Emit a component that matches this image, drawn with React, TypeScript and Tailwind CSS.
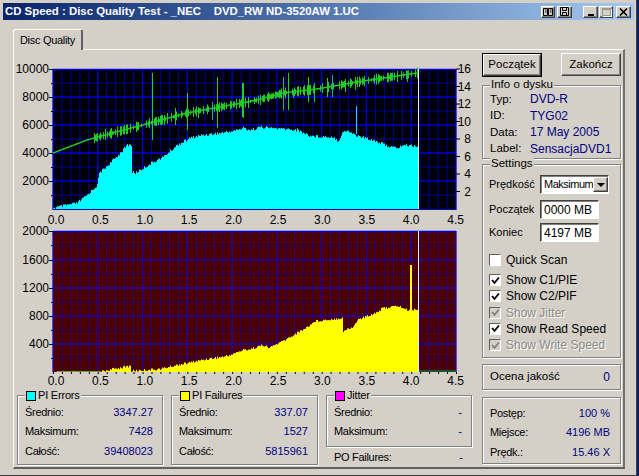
import React from "react";

type P = [number, number];
const cyan: P[] = [[53,208],[77,203],[87,195],[97,185],[99,173],[110,163],[120,153],[127,145],[131,145],[131.5,172],[135,173],[153,162],[163,157],[177,145],[190,138],[203,135],[220,133],[233,131],[243,128],[250,130],[260,127],[283,129],[297,130],[310,136],[333,137],[338,141],[343,131],[350,132],[357,136],[373,140],[390,147],[397,148],[403,145],[418,146]];
const green: P[] = [[53,153],[87,140],[105,135],[150,123],[187,113],[220,107],[247,102],[257,100],[283,93],[317,89],[357,82],[417,73]];
const yellow: P[] = [[53,372],[100,372],[113,369],[130,366],[131,371],[160,369],[177,365],[207,359],[227,356],[243,350],[250,349],[263,345],[268,348],[283,341],[307,327],[315,321],[342,318],[343,331],[353,327],[357,320],[377,312],[383,308],[398,306],[407,310],[418,309]];
const spikes: [number, number, number][] = [[152,73,140],[187,93,130],[217,77,128],[212,102,120],[243,83,118],[175,108,125],[105,129,140],[198,107,118],[283,77,110],[288,73,110],[308,77,102],[314,83,102],[327,78,97],[332,75,97],[355,77,90],[242,83,117],[260,95,105],[397,72,82],[407,72,82],[138,122,130],[164,115,125],[248,97,108],[268,92,102],[293,90,98],[345,80,92]];

const at = (pts: P[], x: number) => {
  for (let i = 1; i < pts.length; i++) {
    if (x <= pts[i][0]) {
      const [a, b] = pts[i - 1];
      const [c, d] = pts[i];
      return b + ((d - b) * (x - a)) / (c - a || 1);
    }
  }
  return pts[pts.length - 1][1];
};
const rnd = (n: number) => {
  const s = Math.sin(n * 12.9898) * 43758.5453;
  return s - Math.floor(s);
};
const area = (pts: P[], bottom: number, amp: number) => {
  let d = `M53 ${bottom}`;
  for (let x = 53; x <= 418; x++) {
    const y = at(pts, x) + (rnd(x) - 0.5) * amp;
    d += `L${x} ${Math.min(bottom, y).toFixed(1)}L${x + 1} ${Math.min(bottom, y).toFixed(1)}`;
  }
  return d + `L419 ${bottom}Z`;
};
const greenLine = () => {
  let d = "";
  for (let x = 53; x <= 417; x++) {
    d += `${x === 53 ? "M" : "L"}${x} ${at(green, x).toFixed(1)}`;
  }
  return d;
};
const greenFuzz = () => {
  let d = "";
  for (let x = 92; x <= 417; x++) {
    if (rnd(x + 3) < 0.55) {
      const y = at(green, x);
      const a = 1.5 + rnd(x + 11) * 4;
      d += `M${x + 0.5} ${(y - a).toFixed(1)}V${(y + a).toFixed(1)}`;
    }
  }
  return d;
};

const FONT = "'Liberation Sans', Arial, sans-serif";

function Grid({ top, bottom, bg, rows, minor, major }: { top: number; bottom: number; bg: string; rows: number[]; minor: string; major: string }) {
  const xs = Array.from({ length: 46 }, (_, i) => 53 + (403 / 45) * i);
  return (
    <g>
      <rect x={53} y={top} width={403} height={bottom - top} fill={bg} />
      {xs.map((x, i) =>
        i % 5 ? <line key={i} x1={x} x2={x} y1={top} y2={bottom} stroke={minor} /> : null
      )}
      {rows.map((y) => (
        <line key={y} x1={53} x2={456} y1={y + 14} y2={y + 14} stroke={minor} />
      ))}
      <line x1={53} x2={456} y1={rows[0] - 14} y2={rows[0] - 14} stroke={minor} />
      {xs.map((x, i) =>
        i % 5 === 0 ? <line key={i} x1={x} x2={x} y1={top} y2={bottom} stroke={major} strokeWidth={1.3} /> : null
      )}
      {rows.map((y) => (
        <line key={y} x1={53} x2={456} y1={y} y2={y} stroke={major} strokeWidth={1.3} />
      ))}
      <line x1={53} x2={456} y1={top + 0.5} y2={top + 0.5} stroke="#0000e0" strokeWidth={1.5} />
    </g>
  );
}

function Charts() {
  const xl = ["0.0", "0.5", "1.0", "1.5", "2.0", "2.5", "3.0", "3.5", "4.0", "4.5"];
  const t = { fontFamily: FONT, fontSize: 12, fill: "#000" };
  return (
    <svg width={462} height={335} viewBox="14 60 462 335" className="block">
      {/* upper */}
      <Grid top={69} bottom={210} bg="#000008" rows={[97, 125, 153, 181]} minor="#000090" major="#0000d8" />
      <path d={area(cyan, 209.5, 3)} fill="#00ffff" />
      <line x1={356.5} x2={356.5} y1={106} y2={134} stroke="#30d8c0" />
      <path d={greenLine()} fill="none" stroke="#22cc22" strokeWidth={1.5} />
      <path d={greenFuzz()} fill="none" stroke="#22cc22" strokeWidth={1} />
      {spikes.map(([x, a, b], i) => (
        <line key={i} x1={x + 0.5} x2={x + 0.5} y1={a} y2={b} stroke={i % 5 === 3 ? "#20b090" : "#22d022"} strokeWidth={1} />
      ))}
      <line x1={418.5} x2={418.5} y1={69} y2={210} stroke="#f0f0f0" />
      <line x1={53} x2={456} y1={209.5} y2={209.5} stroke="#0000c0" />
      {[["10000", 69], ["8000", 97], ["6000", 125], ["4000", 153], ["2000", 181]].map(([s, y]) => (
        <g key={s as string}>
          <text x={49} y={(y as number) + 4} textAnchor="end" {...t}>{s}</text>
          <line x1={49} x2={53} y1={(y as number) + 0.5} y2={(y as number) + 0.5} stroke="#000" />
          <line x1={51} x2={53} y1={(y as number) + 14.5} y2={(y as number) + 14.5} stroke="#000" />
        </g>
      ))}
      {[16, 14, 12, 10, 8, 6, 4, 2].map((n) => {
        const y = 209 - n * 8.75;
        return (
          <g key={n}>
            <line x1={456} x2={460} y1={y} y2={y} stroke="#000" />
            <text x={471} y={y + 4} textAnchor="end" {...t}>{n}</text>
          </g>
        );
      })}
      {xl.map((s, i) => (
        <text key={s} x={56 + 44.4 * i} y={224} textAnchor="middle" {...t}>{s}</text>
      ))}

      {/* lower */}
      <Grid top={231} bottom={372} bg="#4c0000" rows={[260, 288, 316, 344]} minor="#280078" major="#1c00b8" />
      <path d={area(yellow, 372, 2.5)} fill="#ffff00" />
      <line x1={411} x2={411} y1={265} y2={310} stroke="#ffff00" strokeWidth={2} />
      <line x1={418.5} x2={418.5} y1={231} y2={372} stroke="#f0f0f0" />
      <line x1={419} x2={456} y1={371} y2={371} stroke="#205030" strokeWidth={2} />
      <line x1={58} x2={100} y1={371.5} y2={371.5} stroke="#70a020" />
      {[["2000", 231], ["1600", 260], ["1200", 288], ["800", 316], ["400", 344]].map(([s, y]) => (
        <g key={s as string}>
          <text x={49} y={(y as number) + 4} textAnchor="end" {...t}>{s}</text>
          <line x1={49} x2={53} y1={(y as number) + 0.5} y2={(y as number) + 0.5} stroke="#000" />
          <line x1={51} x2={53} y1={(y as number) + 14.5} y2={(y as number) + 14.5} stroke="#000" />
        </g>
      ))}
      {Array.from({ length: 46 }, (_, i) => (
        <rect key={i} x={53 + (403 / 45) * i} y={372} width={1} height={2} fill="#000" />
      ))}
      {xl.map((s, i) => (
        <text key={s} x={56 + 44.4 * i} y={385} textAnchor="middle" {...t}>{s}</text>
      ))}
    </svg>
  );
}

function Stat({ label, value, h = "h-[19.5px]" }: { label: string; value: string; h?: string }) {
  return (
    <div className={`flex items-center justify-between ${h}`}>
      <span className="text-[11px] tracking-[-0.3px]">{label}</span>
      <span className="text-[11px] text-[#000080]">{value}</span>
    </div>
  );
}

function Etched({ className = "", children }: { className?: string; children: React.ReactNode }) {
  return (
    <div className={`relative border border-[#808080] shadow-[1px_1px_0_#fff,inset_1px_1px_0_#fff] ${className}`}>
      {children}
    </div>
  );
}

function Legend({ color, label }: { color: string; label: string }) {
  return (
    <div className="absolute left-[7px] top-[-8px] flex h-[15px] items-center gap-[2px] bg-[#d4d0c8] px-[1px] text-[11px] tracking-[-0.2px]">
      <span className="h-[10px] w-[10px] border border-black" style={{ background: color }} />
      <span>{label}</span>
    </div>
  );
}

function Stats({ color, label, rows, className }: { color: string; label: string; rows: [string, string][]; className: string }) {
  return (
    <Etched className={className}>
      <Legend color={color} label={label} />
      <div className="flex flex-col pl-[7px] pr-[9px] pt-[6px]">
        {rows.map(([a, b]) => (
          <Stat key={a} label={a} value={b} />
        ))}
      </div>
    </Etched>
  );
}

function Check({ label, checked, disabled }: { label: string; checked?: boolean; disabled?: boolean }) {
  return (
    <div className="flex h-[16px] items-center gap-[5px]">
      <span className={`flex h-[12px] w-[12px] items-center justify-center border border-b-white border-l-[#606060] border-r-white border-t-[#606060] ${disabled ? "bg-[#d4d0c8]" : "bg-white"}`}>
        {checked && (
          <svg width="9" height="9" viewBox="0 0 9 9">
            <path d="M1 4 L3.5 6.8 L8 1.5" fill="none" stroke={disabled ? "#808080" : "#000"} strokeWidth="1.8" />
          </svg>
        )}
      </span>
      <span className={disabled ? "text-[#8c8a85] [text-shadow:1px_1px_0_#fff]" : ""}>{label}</span>
    </div>
  );
}

const raised = "border border-t-white border-l-white border-r-[#404040] border-b-[#404040] bg-[#d4d0c8] shadow-[inset_-1px_-1px_0_#808080]";
const sunken = "border border-t-[#404040] border-l-[#404040] border-r-white border-b-white shadow-[inset_1px_1px_0_#808080] bg-white";

function Field({ label, value }: { label: string; value: string }) {
  return (
    <div className="flex h-[19px] items-center">
      <span className="w-[51px] text-[11px]">{label}</span>
      <div className={`flex h-[19px] w-[59px] items-center pl-[3px] ${sunken}`}>{value}</div>
    </div>
  );
}

function TitleBtn({ children, className = "" }: { children: React.ReactNode; className?: string }) {
  return <div className={`flex h-[12px] items-center justify-center ${raised} ${className}`}>{children}</div>;
}

export default function App() {
  return (
    <div className="h-[476px] w-[639px] overflow-hidden bg-[#0a2060]" style={{ fontFamily: FONT, fontSize: 12 }}>
      <div className="flex h-[476px] w-[637px] flex-col bg-[#d4d0c8] p-[3px] text-black shadow-[inset_-1px_-1px_0_#404040]">
        <div className="flex h-[17px] shrink-0 items-center justify-between bg-gradient-to-r from-[#0a246a] to-[#a6caf0] pl-[2px] pr-[3px]">
          <span className="whitespace-pre text-[11.4px] font-bold text-white">CD Speed : Disc Quality Test - _NEC    DVD_RW ND-3520AW 1.UC</span>
          <div className="flex items-center">
            <TitleBtn className="mr-[2px] w-[14px]">
              <svg width="10" height="8" viewBox="0 0 10 8"><path d="M0.5 0.5h4v7h-4zM5.5 0.5h4v7h-4zM2 2h1.5M2 4h1.5M7 2h1.5M7 4h1.5" fill="none" stroke="#000" /></svg>
            </TitleBtn>
            <TitleBtn className="mr-[11px] w-[15px]">
              <svg width="9" height="9" viewBox="0 0 9 9"><path d="M0.5 0.5h8v8h-8zM2.5 0.5v3h4v-3M2.5 8.5v-3h4v3" fill="none" stroke="#000" /></svg>
            </TitleBtn>
            <TitleBtn className="w-[15px]">
              <span className="mt-[6px] h-[2px] w-[6px] bg-black" />
            </TitleBtn>
            <TitleBtn className="ml-[1px] w-[14px]">
              <span className="h-[8px] w-[9px] border border-t-2 border-[#9a9892] shadow-[1px_1px_0_#fff]" />
            </TitleBtn>
            <TitleBtn className="ml-[3px] w-[15px]">
              <svg width="9" height="8" viewBox="0 0 9 8"><path d="M1 0.5 L8 7.5 M8 0.5 L1 7.5" stroke="#000" strokeWidth="1.6" /></svg>
            </TitleBtn>
          </div>
        </div>

        <div className="ml-[10px] mt-[9px] flex h-[20px] shrink-0">
          <div className="z-10 flex h-[21px] w-[70px] items-center justify-center rounded-t-[3px] border-l border-r-2 border-t border-l-white border-r-[#606060] border-t-white bg-[#d4d0c8] text-[11px] tracking-[-0.3px]">
            Disc Quality
          </div>
        </div>

        <div className="ml-[10px] mr-[9px] flex h-[420px] border-b-2 border-l border-r-2 border-t border-b-[#606060] border-l-white border-r-[#707070] border-t-white">
          <div className="flex w-[467px] shrink-0 flex-col">
            <div className="mt-[10px]">
              <Charts />
            </div>
            <div className="flex pl-[3px]">
              <Stats color="#00ffff" label="PI Errors" className="h-[70px] w-[146px]" rows={[["Średnio:", "3347.27"], ["Maksimum:", "7428"], ["Całość:", "39408023"]]} />
              <Stats color="#ffff00" label="PI Failures" className="ml-[8px] h-[70px] w-[147px]" rows={[["Średnio:", "337.07"], ["Maksimum:", "1527"], ["Całość:", "5815961"]]} />
              <div className="ml-[8px] w-[146px]">
                <Stats color="#ff00ff" label="Jitter" className="h-[52px]" rows={[["Średnio:", "-"], ["Maksimum:", "-"]]} />
                <div className="pl-[8px] pr-[9px]">
                  <Stat label="PO Failures:" value="-" />
                </div>
              </div>
            </div>
          </div>

          <div className="flex w-[140px] flex-col pl-[1px] pt-[3px]">
            <div className="flex justify-between">
              <div className="flex h-[24px] w-[60px] items-center justify-center border border-black">
                <div className={`flex h-[22px] w-[58px] items-center justify-center text-[11.5px] ${raised}`}>Początek</div>
              </div>
              <div className={`flex h-[23px] w-[60px] items-center justify-center text-[11.5px] ${raised}`}>Zakończ</div>
            </div>

            <Etched className="mt-[8px] h-[74px] w-[139px] px-[7px] pt-[5px]">
              <div className="absolute left-[7px] top-[-8px] h-[15px] bg-[#d4d0c8] px-[1px] text-[11.5px] leading-[13px]">Info o dysku</div>
              {[["Typ:", "DVD-R"], ["ID:", "TYG02"], ["Data:", "17 May 2005"], ["Label:", "SensacjaDVD1"]].map(([a, b]) => (
                <div key={a} className="flex h-[16.5px] items-center">
                  <span className="w-[40px] text-[11.5px]">{a}</span>
                  <span className="text-[#000080]">{b}</span>
                </div>
              ))}
            </Etched>

            <Etched className="mt-[5px] h-[194px] w-[139px] px-[6px] pt-[10px]">
              <div className="absolute left-[7px] top-[-8px] h-[15px] bg-[#d4d0c8] px-[1px] text-[11.5px] leading-[13px]">Settings</div>
              <div className="flex h-[19px] items-center">
                <span className="w-[51px] text-[11px]">Prędkość</span>
                <div className={`flex h-[19px] w-[69px] items-center justify-between overflow-hidden pl-[3px] ${sunken}`}>
                  <span className="whitespace-nowrap text-[11px] tracking-[-0.5px]">Maksimum</span>
                  <div className={`flex h-[15px] w-[15px] shrink-0 items-center justify-center ${raised}`}>
                    <span className="border-x-[4px] border-t-[4px] border-x-transparent border-t-black" />
                  </div>
                </div>
              </div>
              <div className="mt-[6px] flex flex-col gap-[4px]">
                <Field label="Początek" value="0000 MB" />
                <Field label="Koniec" value="4197 MB" />
              </div>
              <div className="mt-[10px]">
                <Check label="Quick Scan" />
              </div>
              <div className="mt-[4px] flex flex-col gap-[0.3px]">
                <Check label="Show C1/PIE" checked />
                <Check label="Show C2/PIF" checked />
                <Check label="Show Jitter" checked disabled />
                <Check label="Show Read Speed" checked />
                <Check label="Show Write Speed" checked disabled />
              </div>
            </Etched>

            <Etched className="mt-[6px] flex h-[26px] w-[139px] items-center justify-between px-[7px]">
              <span className="text-[11.5px]">Ocena jakość</span>
              <span className="pr-[3px] text-[#000080]">0</span>
            </Etched>

            <Etched className="mt-[7px] h-[67px] w-[139px] pl-[7px] pr-[10px] pt-[5px]">
              <Stat label="Postęp:" value="100 %" />
              <Stat label="Miejsce:" value="4196 MB" />
              <Stat label="Prędk.:" value="15.46 X" />
            </Etched>
          </div>
        </div>
      </div>
    </div>
  );
}
